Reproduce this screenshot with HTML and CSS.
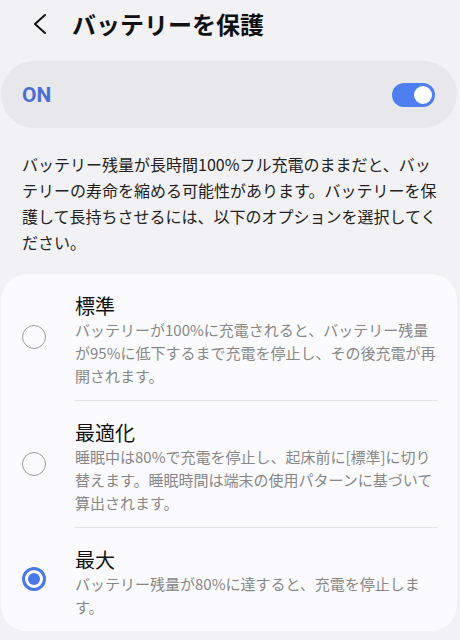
FILE: index.html
```html
<!DOCTYPE html>
<html lang="ja">
<head>
    <meta charset="UTF-8">
    <meta name="viewport" content="width=device-width, initial-scale=1.0">
    <title>バッテリーを保護</title>
    <link rel="stylesheet" href="styles.css">
</head>
<body>
    <header class="app-bar">
        <button class="back-btn" aria-label="戻る">
            <svg width="22" height="24" viewBox="0 0 22 24">
                <path d="M15 3 L5 12 L15 21" fill="none" stroke="#111" stroke-width="2" stroke-linecap="round" stroke-linejoin="round"/>
            </svg>
        </button>
        <h1>バッテリーを保護</h1>
    </header>

    <main class="content">
        <!-- メインスイッチ -->
        <div class="master-switch">
            <span class="switch-label">ON</span>
            <span class="toggle on"><span class="knob"></span></span>
        </div>

        <p class="intro">バッテリー残量が長時間100%フル充電のままだと、バッテリーの寿命を縮める可能性があります。バッテリーを保護して長持ちさせるには、以下のオプションを選択してください。</p>

        <!-- オプション一覧 -->
        <div class="card">
            <div class="option">
                <span class="radio"></span>
                <div class="option-body">
                    <div class="option-title">標準</div>
                    <div class="option-desc">バッテリーが100%に充電されると、バッテリー残量が95%に低下するまで充電を停止し、その後充電が再開されます。</div>
                </div>
            </div>
            <div class="option">
                <span class="radio"></span>
                <div class="option-body">
                    <div class="option-title">最適化</div>
                    <div class="option-desc">睡眠中は80%で充電を停止し、起床前に[標準]に切り替えます。睡眠時間は端末の使用パターンに基づいて算出されます。</div>
                </div>
            </div>
            <div class="option">
                <span class="radio checked"></span>
                <div class="option-body">
                    <div class="option-title">最大</div>
                    <div class="option-desc">バッテリー残量が80%に達すると、充電を停止します。</div>
                </div>
            </div>
        </div>
    </main>
</body>
</html>
```

FILE: styles.css
```css
/* Reset dasar */
* {
    margin: 0;
    padding: 0;
    box-sizing: border-box;
}

body {
    font-family: "Noto Sans CJK JP", "Noto Sans", sans-serif;
    background: #f2f2f5;
    color: #1a1a1a;
    width: 460px;
    min-height: 640px;
}

/* Header */
.app-bar {
    display: flex;
    align-items: center;
    height: 40px;
    padding: 8px 0 0 30px;
}

.back-btn {
    background: none;
    border: none;
    width: 22px;
    height: 24px;
    margin-right: 20px;
    display: flex;
}

.app-bar h1 {
    font-size: 24px;
    line-height: 32px;
    font-weight: 700;
    color: #111;
}

.content {
    padding: 21px 3px 0 1px;
}

/* Switch utama */
.master-switch {
    display: flex;
    align-items: center;
    justify-content: space-between;
    height: 67px;
    padding: 0 22px 0 21px;
    background: #e8e8ec;
    border-radius: 34px;
}

.switch-label {
    font-family: Roboto, sans-serif;
    font-size: 21px;
    font-weight: 700;
    color: #4a6fcf;
}

.toggle {
    position: relative;
    width: 43px;
    height: 24px;
    border-radius: 12px;
    background: #4f7ef0;
}

.toggle .knob {
    position: absolute;
    top: 3px;
    right: 3px;
    width: 18px;
    height: 18px;
    border-radius: 50%;
    background: #fff;
}

/* Teks penjelasan */
.intro {
    padding: 23px 18px 0 21px;
    font-size: 16px;
    line-height: 26px;
    color: #222;
}

/* Kartu opsi */
.card {
    margin-top: 19px;
    background: #fbfbfd;
    border-radius: 26px;
    padding: 0 19px 0 21px;
}

.option {
    display: flex;
    align-items: center;
}

.radio {
    flex: none;
    width: 24px;
    height: 24px;
    border-radius: 50%;
    border: 1.5px solid #9c9c9c;
    margin-right: 29px;
    display: flex;
    align-items: center;
    justify-content: center;
}

.radio.checked {
    border: 3px solid #4a78e6;
}

.radio.checked::after {
    content: "";
    width: 12px;
    height: 12px;
    border-radius: 50%;
    background: #4a78e6;
}

.option-body {
    flex: 1;
    padding: 19px 0 13px;
}

.option + .option .option-body {
    border-top: 1px solid #e5e5e9;
}

.option-title {
    font-size: 20px;
    line-height: 25px;
    color: #111;
}

.option-desc {
    font-size: 15px;
    line-height: 23px;
    color: #878787;
}
```
